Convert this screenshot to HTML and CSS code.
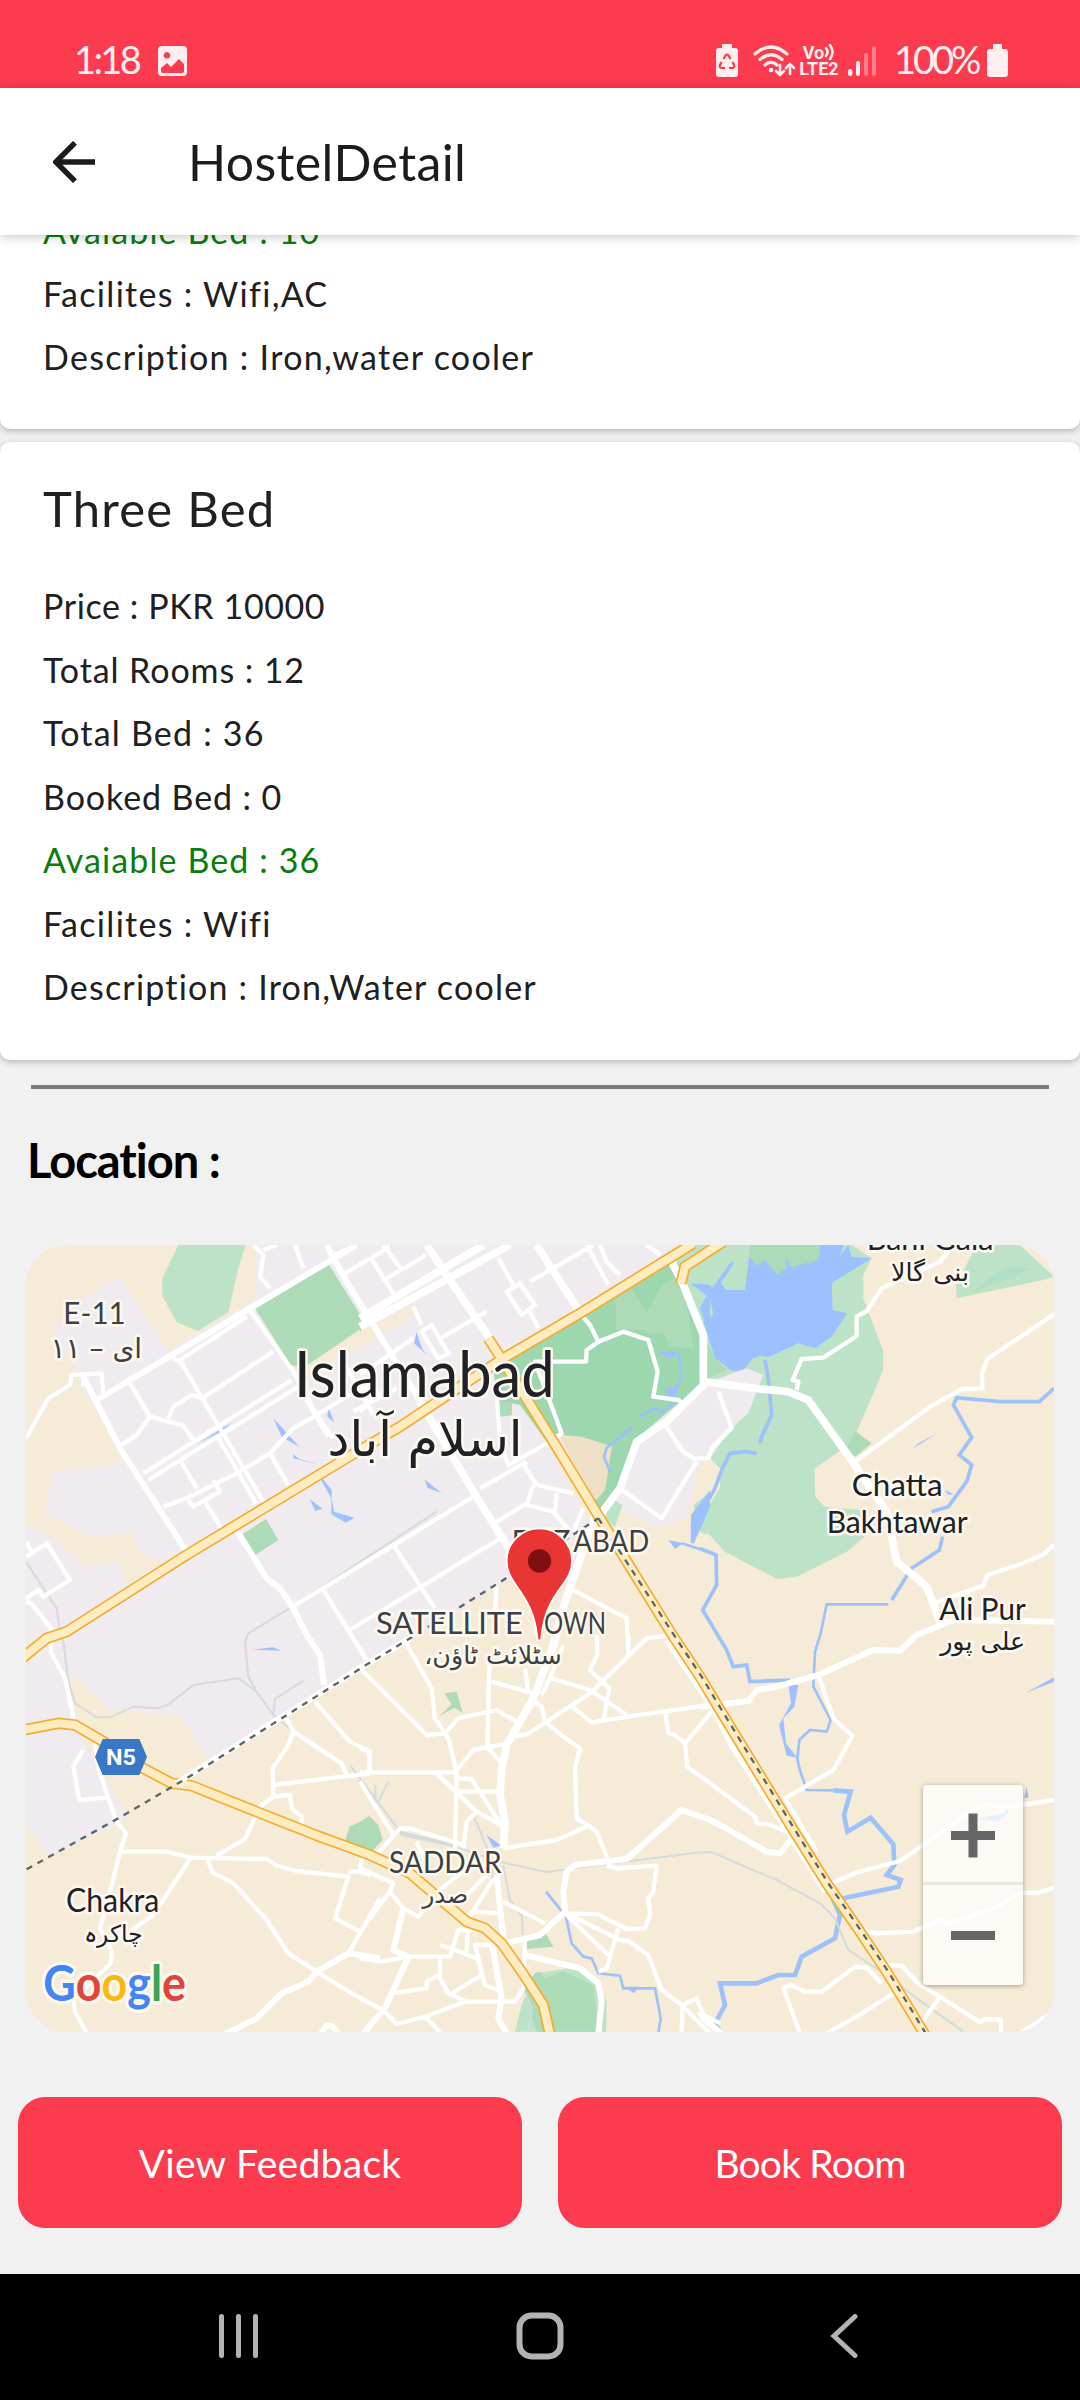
FILE: index.html
```html
<!DOCTYPE html>
<html lang="en">
<head>
<meta charset="utf-8">
<title>HostelDetail</title>
<link rel="stylesheet" href="styles.css">
</head>
<body>
<div class="screen">
  <header class="status">
    <div class="status-left">
      <span class="clock">1:18</span>
      <svg class="ico-image" width="29" height="30" viewBox="0 0 29 30"><path fill-rule="evenodd" d="M4 0H25Q29 0 29 4V26Q29 30 25 30H4Q0 30 0 26V4Q0 0 4 0ZM9 6a3.3 3.3 0 1 0 .01 0ZM3 22V25Q3 27 5 27H24Q26 27 26 25V18L21 13L13 21L9 17Z"/></svg>
    </div>
    <div class="status-right">
      <svg width="22" height="33" viewBox="0 0 22 33"><path d="M6 0H16V4H19Q22 4 22 7V30Q22 33 19 33H3Q0 33 0 30V7Q0 4 3 4H6Z"/><path class="cut" d="M7.500 15L9.500 11.500Q11 9.500 12.500 11.500L14.500 15M16.500 18L18 21Q19 24 16 24H13M9 24H6Q3 24 4 21L5.500 18"/></svg>
      <svg class="ico-wifi" width="42" height="32" viewBox="0 0 42 32"><path class="line" d="M2 9Q18 -5 34 9M7 14.500Q18 5 29 14.500M12 20Q18 14.500 24 20"/><circle cx="18" cy="25" r="2.300"/><path class="line thin" d="M27 20V30M23 26L27 30L31 26M37 29V19M33 23L37 19L41 23"/></svg>
      <span class="volte"><span class="vo">Vo<svg width="11" height="16" viewBox="0 0 11 16"><path class="line thin" d="M2 4Q5 8 2 12M6 1Q11 8 6 15"/></svg></span><span>LTE2</span></span>
      <svg class="ico-signal" width="29" height="31" viewBox="0 0 29 31"><rect x="0" y="23" width="4.400" height="7" rx="2"/><rect x="8" y="15" width="4" height="15" rx="2"/><g opacity=".38"><rect x="16" y="7" width="4" height="23" rx="2"/><rect x="24" y="0" width="4" height="30" rx="2"/></g></svg>
      <span class="pct">100%</span>
      <svg width="21" height="33" viewBox="0 0 21 33"><path d="M6 0H15V5H18Q21 5 21 8V30Q21 33 18 33H3Q0 33 0 30V8Q0 5 3 5H6Z"/></svg>
    </div>
  </header>

  <nav class="appbar">
    <svg class="back" width="42" height="42" viewBox="0 0 42 42"><path d="M42 21H4M22 1.800L2.800 21L22 40.200"/></svg>
    <h1>HostelDetail</h1>
  </nav>

  <main class="content">
    <section class="card card-top">
      <p class="avail t11">Avaiable Bed : 10</p>
      <p class="t13">Facilites : Wifi,AC</p>
      <p class="t13">Description : Iron,water cooler</p>
    </section>
    <section class="card">
      <h2>Three Bed</h2>
      <p class="t6">Price : PKR 10000</p>
      <p class="t9">Total Rooms : 12</p>
      <p class="t12">Total Bed : 36</p>
      <p class="t9">Booked Bed : 0</p>
      <p class="avail t11">Avaiable Bed : 36</p>
      <p class="t13">Facilites : Wifi</p>
      <p class="t12">Description : Iron,Water cooler</p>
    </section>
    <hr class="rule">
    <h3>Location :</h3>

    <div class="map">
      <svg class="map-art" width="1028" height="787" viewBox="18 30 3084 2361">
        <!-- land use -->
        <path class="urban" d="M18 30H2000L1440 380L1590 640L1730 900L1640 1000L1450 1040L1300 1140L1020 1300L565 1575L485 1445L270 1420L150 1310L180 1500L325 1750L85 1865L18 1760Z"/>
        <path class="sand" d="M18 30H710L705 190L445 350L300 125L190 190L95 290L165 400L185 455L300 640L290 688L95 712L75 835L225 910L335 888L360 955L440 980L320 1050L300 980L195 997L100 910L18 865Z"/>
        <path class="g1" d="M475 30H677L655 100L625 232L533 288L470 262L427 182V130Z"/>
        <path class="sand" d="M703 217L812 400L870 430L1200 230L1180 210L1040 280Z"/>
        <path class="g2" d="M920 78L1040 270L850 398L812 390L703 217ZM665 900L738 852L775 915L703 962ZM1020 235L1042 270L1020 290Z"/>
        <g transform="translate(2040 0)">
          <path class="g1" d="M-60 30H455L515 70L490 120V190L550 350V405L470 590L515 625L465 665L430 640L343 702L346 785L375 815L480 825L500 900L440 950L290 1025L232 1033L75 950L15 885V830L60 760V700L30 670L0 440L-110 100Z"/>
          <path class="g1" d="M830 30H960L1062 125L1030 135L770 190L768 150ZM-20 810L20 780V900L0 890Z"/>
          <path class="g2" d="M465 590L515 625L465 665L440 635ZM20 320L45 370L80 405L20 432Z"/>
          <path class="teal" d="M815 175L880 120L925 95L995 100Z"/>
          <path class="water" d="M150 30H430L420 62L445 30L455 65L515 70L395 145L398 225L442 235L395 305L345 340L295 325L205 367L182 362L160 370L130 405L95 408L45 370L10 260L40 240L30 190L-30 145L40 155L95 78L102 85L62 145L80 165L135 165L148 60Z"/>
          <path class="g2" d="M150 30H360L355 75L275 97L255 65L260 98L232 120L195 75L172 92L148 65Z"/>
        </g>
        <path class="urban" d="M2180 400L2230 420L2185 535L2135 580L2070 670L2040 680L2000 850L1910 880L1810 830L1780 780L1850 610L2040 450Z"/>
        <g transform="translate(1020 0)">
          <path class="g3" d="M400 390L440 370L945 60L1030 300L1020 450L830 610L780 750L715 830L700 795L735 760L755 635L665 605L590 600L650 760L560 620L480 510L455 505V540L415 545Z"/>
          <path class="g2" d="M765 185L810 150L860 235L905 150L940 130L980 200L1000 340L930 335L910 290L875 300L850 285L770 285ZM415 500L455 500V540L415 545Z"/>
          <path class="g1" d="M765 795L787 812L765 875L735 855L745 810Z"/>
          <path class="tan" d="M600 605L665 605L755 635L735 765L710 795L690 780Z"/>
          <path class="water" d="M170 292L185 340L198 357L162 325ZM193 733L245 775L203 758ZM892 350H957L930 372ZM917 462L955 450L945 505L920 480ZM1010 145L1050 150V310L1020 220L1040 180ZM925 915L970 925L945 942ZM1050 765V815L1002 925H992L993 840Z"/>
          <path class="stream s8" d="M957 355L963 420L940 505L900 535L887 518L838 545M820 575L740 638L732 665L750 710M965 925L1060 955"/>
        </g>
        <path class="water" d="M760 550L838 635L785 605ZM820 658L838 672L898 690L820 670ZM905 728L935 765V790L942 830L1003 848L978 863L934 838V790L900 730ZM870 793L908 822L885 828ZM925 518L943 562L922 545ZM530 628L638 560L600 592ZM695 1244L760 1237L783 1247Z"/>
        <g transform="translate(1020 1200)">
          <path class="g2" d="M253 175L290 170L308 233L283 218L238 243L275 208ZM0 560L28 543L55 570L68 615L30 655L-45 620L-32 575ZM500 915L558 897L580 935L498 942Z"/>
          <path class="g1" d="M525 1015L630 1000L690 1020L740 1100L738 1190H465L485 1110Z"/>
          <path class="g2" d="M525 1015L540 1010L555 1030L610 1010L700 1050L715 1190H530L490 1060Z"/>
          <path class="water" d="M380 600L425 632L400 638ZM790 1055H835L822 1075Z"/>
          <path class="stream s8" d="M558 770L618 845L635 925L670 965L695 970L715 1015L780 1022L790 1060L885 1060L902 1150L895 1195"/>
        </g>
        <!-- rivers -->
        <g transform="translate(2040 0)">
          <path class="stream s10" d="M195 375L205 430L215 540L185 605L180 625M170 655L135 650L90 655L65 705L45 760L0 840L-25 880M1062 460L1018 500L900 500L770 488L760 510L815 607L778 660L815 690L800 740L745 815L695 830M728 905L718 945L635 1000L575 1095M0 940L48 960L50 1050L8 1125L50 1195L80 1245L100 1295L140 1290L150 1340L270 1335"/>
          <path class="stream s8" d="M565 1108L380 1108L362 1195L345 1250L340 1355L392 1455L380 1490L330 1485L298 1515L292 1570L298 1600L320 1665L400 1666"/>
          <path class="stream s12" d="M400 1666L452 1670L432 1740L442 1790L512 1748L580 1828L583 1890L560 1920L602 1935L595 1955L430 1990L402 2000L420 2040L405 2110L305 2165L285 2220L235 2220L170 2245L60 2245L75 2310L45 2365L60 2390"/>
          <path class="water" d="M265 1350H295L283 1415L250 1450L258 1525L292 1568L260 1562L237 1470L273 1405ZM640 640L655 625L712 595ZM975 1375L1062 1327V1340ZM980 1655L986 1688H973ZM735 765L760 778L745 780ZM830 1752L915 1735L920 1720L925 1735L895 1760Z"/>
        </g>
        <!-- minor rail -->
        <path class="rail" d="M18 980L110 1120L120 1190L130 1220L145 1340L165 1405L230 1447H270L340 1415L415 1420L450 1405L520 1350L655 1330L710 1370L760 1440L820 1490M710 1370L685 1325L675 1220L685 1195L800 1125L1250 830M760 1440L765 1392L850 1337"/>
        <path class="rail" d="M990 1590L1140 1790L1320 1840L1440 1880L1580 1912L1660 1900L2040 1852H2075L2270 1935L2400 2005L2445 2050L2485 2145L2600 2220L2690 2290L2830 2390M1450 1890L1470 1995L1507 2045V2100M1360 1740L1410 1860L1420 1940M1510 2260L1535 2320L1525 2391M1072 1705L1105 1640M1066 1705V1650"/>
        <path class="rail wide" d="M1020 1635L1070 1705M1140 1795L1300 1830"/>
        <!-- streets -->
        <path class="road r20" d="M230 495L690 220L1010 30M190 425L300 640L500 950M920 30L980 140L1220 530M650 885L740 1030L780 1060L820 1120L860 1200L900 1260L912 1350"/>
        <path class="road" d="M18 610L85 490L150 450L155 420L245 415L250 480M190 425V455M330 445L390 545L350 600L305 630M390 545L490 572L520 615M445 550L460 515L515 480L545 490L760 350M460 370L485 385L600 580L730 800M590 600L708 805M370 715L815 435M385 735L835 455M690 225L820 410L890 540L940 610M850 480L925 605M480 375L680 245M430 815L510 785L650 715L750 655L820 580L890 540L980 485L1060 445M480 675L530 760M750 655L805 750M555 800L605 880M505 795L520 815L600 770L580 735M18 965L80 925L150 1035L70 1085L55 1065L18 1090M18 920L35 950M18 1100L35 1105L100 1190M810 1120L1360 785M910 1065L1040 1275M990 1185L1450 905M700 30L730 60L720 125L750 160M730 45L770 30M825 30L850 100M930 65L1010 30M975 115L1110 35M970 380L1060 540M1000 530L1130 460"/>
        <g transform="translate(1020 0)">
          <path class="road r24" d="M200 30L280 150L390 310M180 500L340 770L440 930L480 1010M530 30L600 140L660 230M0 250L370 30M0 275L450 30M935 60L940 90L970 150L1030 300V440L1200 462L1285 470L1345 495L1485 690L1580 830L1610 980L1700 1055L1740 1160M1040 440L920 560L830 620L780 760L720 840"/>
          <path class="road" d="M70 30L125 105M30 65L110 190M80 130L200 60M160 215L185 270M185 290L215 270L265 355L235 370ZM240 310L380 230M415 70L460 150M440 170L480 145L525 210L485 240ZM510 230L535 280M510 140L700 30M680 30L745 150M720 30L740 80L780 120M860 30L900 60M660 235L690 270L715 320L680 345L678 380H525L605 595L570 618M715 320L790 290L865 315L893 410L880 485L955 495L975 510M410 480L420 620L445 690L570 620M360 760L500 680M485 680L530 750L640 775M520 750L500 810L580 830L630 890M590 775L585 830M410 860L500 805M100 930L225 1120M630 1060L800 1150L805 1255M410 1050L405 1130M915 570L970 650L1000 670H1045L1055 640L1115 578L1075 470M780 760L905 850L1010 680M670 820L640 890M0 420L160 310M0 530L60 470"/>
          <path class="road r24" d="M710 830L640 1030L605 1130L580 1240"/>
          <path class="road" d="M1310 465L1315 440L1298 435L1325 372L1390 368L1490 303V245L1520 228L1565 160L1740 80L1780 30M1485 680L1710 515L1805 462L1868 460L1865 420L1882 372L2082 238M1720 1105L1870 1052L1882 1020L1975 990L2050 958L2082 930"/>
        </g>
        <g transform="translate(0 1200)">
          <path class="road" d="M95 20L92 50L135 130L162 255M225 325L235 400L265 490L290 560L318 595L300 650L270 770L240 880L275 950L272 985L160 1090L165 1130L200 1195M190 345L160 395L178 495L265 487M300 650H440L510 668L740 672L770 692L830 708L985 725L945 850L1020 890M515 665L400 840L300 910M560 668L578 712L640 745L740 855L805 955L890 1010L970 1060L1050 1105M985 955L1080 790M590 662L675 612L720 515L760 485L810 480L815 520L845 545V580M760 485L758 400L805 330L820 290L800 250M820 290L965 385L980 420M760 450L1050 415M885 200L990 320L1050 350V410M1025 670L1020 710L1050 720M1020 710H985"/>
          <path class="road r20" d="M600 1205L710 1150L785 1075L865 1040L890 1010L985 955L1080 970M900 1200L920 1172H935L960 1200"/>
        </g>
        <g transform="translate(1020 1200)">
          <path class="road r24" d="M585 10L570 60L520 190L440 330L425 400L420 480L435 560L430 640"/>
          <path class="road r20" d="M410 720L432 930M432 925L500 910L540 900L615 830L610 770L620 710L645 690L800 672L965 525L1050 555L1080 570L1220 650L1260 655L1295 610M495 960L660 1000L715 1045L725 1100L715 1195M145 965L75 1120L10 1195M395 920L425 1090L415 1150L440 1195M130 820L100 945L145 965"/>
          <path class="road" d="M0 100L200 300L255 295L295 250L410 225L470 260M130 10L215 160L225 250L265 310L290 410L285 640M388 90L382 330M0 340L28 350V410M0 412H285L340 345L445 325M395 140L520 175M495 100L505 170M460 305L500 298L560 260L690 175L860 10L930 0M575 130L690 165L800 240M630 210L695 262L850 238L1050 210L1165 198M610 30L570 130L545 180M515 195L545 215L555 260L610 305L660 340L645 400L650 550L690 575L710 590L742 670M430 640L590 615L690 570M710 0L712 60L690 105L748 160L730 260M805 0V60M915 230L925 295L945 300L975 325L1055 230M975 325L982 395L1050 445L1185 545L1190 565L1225 568L1290 595M385 340L430 390M230 415L350 530L430 575M290 430L335 432L430 580M295 470H420M310 640L320 560L345 535M740 690L770 700L890 692L880 770L865 790L870 840L855 880L800 882L715 838L615 835L745 960M775 880L740 1000L715 1010M630 840L780 915L805 918L865 960L905 1065L965 1110L1050 1195M965 1190L968 1110L1010 1090L1030 1140L1080 1165M430 800L555 865M495 910L490 1060L465 1100H315L195 1145L110 1167L70 1125L0 1090M320 1100L265 1075L240 1030V970M0 970L65 980L145 965H270L295 885H390M0 700L100 745L90 770L130 820L175 845L220 780L320 700M90 770L0 890M40 670L120 580H150L310 630M0 440L100 600M170 620L200 690M90 1075L200 1060V1040L240 1020M195 1145L240 1190M275 1075L365 1020L345 930H400M320 950L325 850L395 740L410 730M345 830L420 835M350 950L375 1050L425 1070M240 930L300 950L360 975M300 800L380 720"/>
        </g>
        <g transform="translate(2040 1200)">
          <path class="road r20" d="M0 215L145 198L170 165L230 155L355 120L520 45L600 47L650 0L760 -45L1062 -40"/>
          <path class="road" d="M355 120L400 250L457 303L400 405L255 490L350 650M395 745L470 712L600 678L840 510L930 515L1062 495M490 885L530 895L640 890L725 853L740 867L880 820L960 775L1020 772L1062 757M550 990L605 992L660 1050L720 1085L840 1162L855 1152L903 1155V1195M720 1085L660 1170M380 1195L470 1145L580 1075M300 1195L250 1060L272 1050L315 1070H365L465 995L500 998L545 1045M960 1195L1062 1130"/>
          <path class="road r20" d="M-100 15L40 220L95 330L270 600L375 770M0 1130L10 1150L70 1200"/>
        </g>
        <!-- highways -->
        <path class="hw-edge" d="M0 1275L80 1210L140 1190L500 960L1020 645L1140 575L1320 455L1450 370L1680 235L1980 50L2020 25M2110 20L1995 95L1983 145M1405 310L1450 380L1600 620L1740 850L1960 1205L2040 1325L2100 1425L2320 1785L2420 1945L2520 2090L2600 2210L2715 2400M0 1487L115 1465L165 1470L250 1520L370 1600L455 1645L515 1652L710 1730L900 1805L1050 1860L1170 1915L1340 2060L1395 2080L1445 2125L1505 2210L1570 2310L1590 2400"/>
        <path class="hw-mid" d="M0 1275L80 1210L140 1190L500 960L1020 645L1140 575L1320 455L1450 370L1680 235L1980 50L2020 25M2110 20L1995 95L1983 145M1405 310L1450 380L1600 620L1740 850L1960 1205L2040 1325L2100 1425L2320 1785L2420 1945L2520 2090L2600 2210L2715 2400M0 1487L115 1465L165 1470L250 1520L370 1600L455 1645L515 1652L710 1730L900 1805L1050 1860L1170 1915L1340 2060L1395 2080L1445 2125L1505 2210L1570 2310L1590 2400"/>
        <!-- main rail -->
        <path class="road r20" d="M470 1645L1030 1292L1170 1210"/>
        <path class="dash" d="M20 1903L295 1750L500 1630L1030 1295L1170 1210L1450 1035L1735 850"/>
        <path class="dash" d="M1735 850L1965 1205L2045 1325L2105 1425L2325 1785L2425 1945L2525 2090L2605 2210L2720 2400"/>
        <!-- labels -->
        <g class="lbl soft">
          <text x="130" y="268" font-size="92" textLength="187" lengthAdjust="spacingAndGlyphs">E-11</text>
          <text class="ar" x="229" y="370" font-size="84" text-anchor="middle" direction="rtl">ای – ۱۱</text>
          <text x="1475" y="952" font-size="90"><tspan textLength="176" lengthAdjust="spacingAndGlyphs">FAIZ</tspan><tspan x="1660" textLength="228" lengthAdjust="spacingAndGlyphs">ABAD</tspan></text>
          <text x="1068" y="1198" font-size="90"><tspan textLength="440" lengthAdjust="spacingAndGlyphs">SATELLITE</tspan> <tspan x="1532" textLength="226" lengthAdjust="spacingAndGlyphs">TOWN</tspan></text>
          <text class="ar" x="1419" y="1288" font-size="76" text-anchor="middle" direction="rtl">سٹلائٹ ٹاؤن،</text>
          <text x="1107" y="1914" font-size="94" textLength="338" lengthAdjust="spacingAndGlyphs">SADDAR</text>
          <text class="ar" x="1276" y="2003" font-size="74" text-anchor="middle" direction="rtl">صدر</text>
        </g>
        <g class="lbl">
          <text x="822" y="485" font-size="192" textLength="782" lengthAdjust="spacingAndGlyphs">Islamabad</text>
          <text class="ar" x="1215" y="664" font-size="148" text-anchor="middle" direction="rtl">اسلام آباد</text>
          <text x="2540" y="45" font-size="94" textLength="380" lengthAdjust="spacingAndGlyphs">Bani Gala</text>
          <text class="ar" x="2730" y="137" font-size="76" text-anchor="middle" direction="rtl">بنی گالا</text>
          <text x="2495" y="782" font-size="94" textLength="273" lengthAdjust="spacingAndGlyphs">Chatta</text>
          <text x="2420" y="893" font-size="94" textLength="423" lengthAdjust="spacingAndGlyphs">Bakhtawar</text>
          <text x="2758" y="1156" font-size="94" textLength="259" lengthAdjust="spacingAndGlyphs">Ali Pur</text>
          <text class="ar" x="2888" y="1244" font-size="76" text-anchor="middle" direction="rtl">علی پور</text>
          <text x="138" y="2030" font-size="96" textLength="280" lengthAdjust="spacingAndGlyphs">Chakra</text>
          <text class="ar" x="280" y="2120" font-size="70" text-anchor="middle" direction="rtl">چاکرہ</text>
        </g>
        <path fill="#3978c7" d="M248 1512H358L381 1566L358 1620H248L225 1566Z"/>
        <text class="shield" x="258" y="1590" font-size="68" textLength="90" lengthAdjust="spacingAndGlyphs">N5</text>
        <path fill="#ea3535" stroke="#fff" stroke-width="5" d="M1553 1216C1548 1160 1536 1120 1500 1068C1472 1028 1460 1008 1460 978A98 98 0 0 1 1656 978C1656 1008 1645 1028 1616 1066C1578 1120 1568 1160 1563 1216Z"/>
        <circle cx="1558.500" cy="978" r="35" fill="#7f0f10"/>
        <text class="google" x="70" y="2299" font-size="148" textLength="428" lengthAdjust="spacingAndGlyphs"><tspan fill="#4285f4">G</tspan><tspan fill="#e1443a">o</tspan><tspan fill="#f7b90c">o</tspan><tspan fill="#4285f4">g</tspan><tspan fill="#35a552">l</tspan><tspan fill="#e1443a">e</tspan></text>
      </svg>
      <div class="zoom">
        <div class="zoom-btn"><i class="bar"></i><i class="bar upright"></i></div>
        <div class="zoom-btn"><i class="bar"></i></div>
      </div>
    </div>

    <div class="actions">
      <button class="btn b-view">View Feedback</button>
      <button class="btn b-book">Book Room</button>
    </div>
  </main>

  <footer class="navbar">
    <svg width="42" height="44" viewBox="0 0 42 44"><path d="M3.500 2.500V41.500M20.500 2.500V41.500M37.500 2.500V41.500"/></svg>
    <svg class="home" width="48" height="48" viewBox="0 0 48 48"><rect x="3.500" y="3.500" width="41" height="41" rx="12"/></svg>
    <svg width="30" height="44" viewBox="0 0 30 44"><path d="M26 2.500L5 22L26 41.500"/></svg>
  </footer>
</div>
</body>
</html>
```
FILE: styles.css
```css
* { box-sizing: border-box; margin: 0; padding: 0; }
body { width: 1080px; height: 2400px; overflow: hidden; background: #f1f1f1; font-family: Lato, "Open Sans", sans-serif; color: #202022; }
.screen { display: flex; flex-direction: column; width: 1080px; height: 2400px; overflow: hidden; }

.status { height: 88px; flex: none; background: #fc3b4f; color: #ffeef0; display: flex; justify-content: space-between; align-items: flex-start; padding: 44px 72px 0 74px; }
.status svg { fill: #ffeef0; flex: none; display: block; }
.status .line { fill: none; stroke: #ffeef0; stroke-width: 3.2; stroke-linecap: round; }
.status .thin { stroke-width: 2.6; }
.status .cut { fill: none; stroke: #fc3b4f; stroke-width: 2.2; }
.status-left, .status-right { display: flex; align-items: flex-start; }
.clock { font-size: 38px; line-height: 31px; width: 84px; letter-spacing: -2.6px; white-space: nowrap; }
.ico-image { margin-top: 2px; }
.ico-wifi { margin: 1px 0 0 15px; }
.volte { display: flex; flex-direction: column; align-items: center; width: 44px; margin-left: 2px; font: bold 18px/18px Roboto, sans-serif; }
.volte span { display: flex; height: 16px; }
.ico-signal { margin: 2px 0 0 7px; }
.pct { font-size: 38px; line-height: 31px; width: 93px; margin-left: 17px; letter-spacing: -3px; white-space: nowrap; }

.appbar { height: 147px; flex: none; position: relative; z-index: 1; background: #fff; display: flex; align-items: center; padding-left: 53px; box-shadow: 0 2px 10px rgba(0, 0, 0, .22); }
.back { fill: none; stroke: #1c1c1e; stroke-width: 5.4; margin-right: 93px; }
h1 { font-size: 50px; font-weight: 400; line-height: 60px; letter-spacing: .4px; color: #1c1c1e; white-space: nowrap; }

.content { height: 2039px; flex: none; display: flex; flex-direction: column; }
.card { background: #fff; border-radius: 10px; height: 618px; flex: none; padding: 32px 43px 0; box-shadow: 0 2px 6px rgba(0, 0, 0, .25); }
.card-top { height: 194px; padding-top: 0; margin: 0 0 13px; border-radius: 0 0 10px 10px; }
.card-top .avail { margin-top: -36px; }
.card p { font-size: 34px; line-height: 63.5px; height: 63.5px; white-space: nowrap; }
.card-top p { height: 63px; }
.card .avail { color: #0a7d0a; }
.t6 { letter-spacing: .6px; }
.t9 { letter-spacing: .9px; }
.t11 { letter-spacing: 1.1px; }
.t12 { letter-spacing: 1.2px; }
.t13 { letter-spacing: 1.3px; }
h2 { font-size: 49px; font-weight: 400; line-height: 68px; height: 100px; letter-spacing: 1.2px; white-space: nowrap; }
.rule { flex: none; height: 4px; border: 0; background: #7b7b7b; margin: 25px 31px 0; }
h3 { flex: none; height: 156px; padding: 41px 0 0 27px; font-size: 47px; font-weight: 700; line-height: 60px; letter-spacing: -1px; color: #000; }

.map { position: relative; flex: none; width: 1028px; height: 787px; margin: 0 26px; border-radius: 40px; overflow: hidden; background: #f6ebd6; }
.map-art { display: block; }
.urban { fill: #efebef; }
.sand { fill: #f6ebd6; }
.tan { fill: #eedfc6; }
.g1 { fill: #bce3c7; }
.g2 { fill: #addbb7; }
.g3 { fill: #9dd7ae; }
.teal { fill: #b3dfc9; }
.water { fill: #9dc1ff; }
.stream { fill: none; stroke: #9dc1fb; stroke-linejoin: miter; }
.s8 { stroke-width: 8; }
.s10 { stroke-width: 11; }
.s12 { stroke-width: 14; }
.rail { fill: none; stroke: #d5dadc; stroke-width: 6; }
.rail.wide { stroke-width: 13; }
.road { fill: none; stroke: #fff; stroke-width: 13; stroke-linejoin: round; }
.r20 { stroke-width: 18; }
.r24 { stroke-width: 23; }
.hw-edge { fill: none; stroke: #f2ad2e; stroke-width: 34; }
.hw-mid { fill: none; stroke: #feecc0; stroke-width: 24; }
.dash { fill: none; stroke: #5b6669; stroke-width: 7; stroke-dasharray: 19 18; }
.lbl { fill: #202124; stroke: #fcf8f0; stroke-width: 16; stroke-linejoin: round; paint-order: stroke; font-family: Lato, sans-serif; }
.lbl.soft { fill: #3c4043; }
.ar { font-family: "DejaVu Sans", sans-serif; }
.shield { font-family: Roboto, sans-serif; font-weight: 700; fill: #fff; }
.google { font-family: Lato, sans-serif; font-weight: 700; stroke: #fcf8f0; stroke-width: 20; stroke-linejoin: round; paint-order: stroke; }

.zoom { position: absolute; left: 897px; top: 540px; width: 100px; height: 200px; border-radius: 4px; background: rgba(255, 255, 255, .76); box-shadow: 0 1px 5px rgba(0, 0, 0, .35); }
.zoom-btn { height: 100px; display: grid; place-items: center; }
.zoom-btn + .zoom-btn { box-shadow: 0 -3px 0 #e9e6e1; }
.bar { grid-area: 1 / 1; width: 44px; height: 9px; background: #666; }
.upright { transform: rotate(90deg); }

.actions { flex: none; display: flex; gap: 36px; padding: 65px 18px 0; }
.btn { flex: 1; height: 131px; border: 0; border-radius: 27px; background: #fc3b4f; color: #fff; font: 400 39px/50px Lato, sans-serif; white-space: nowrap; }
.b-view { letter-spacing: .3px; }
.b-book { letter-spacing: -.8px; }

.navbar { flex: none; height: 126px; background: #000; display: flex; align-items: center; padding: 0 0 2px 218px; }
.navbar svg { flex: none; fill: none; stroke: #b3b3b3; stroke-width: 5; stroke-linecap: round; }
.navbar .home { margin: 0 265px 0 256px; stroke-width: 6; }
```
